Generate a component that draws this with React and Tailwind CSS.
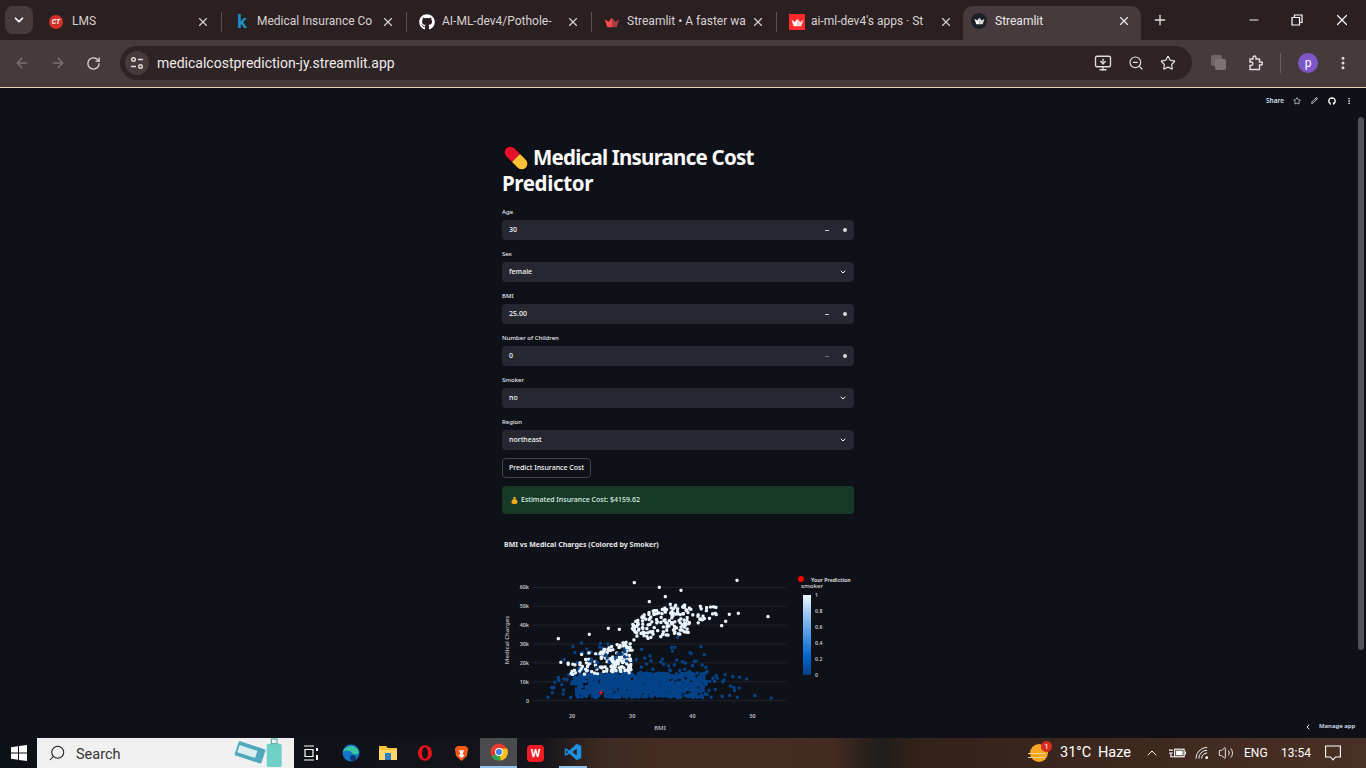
import React from 'react';
import { ArrowLeft, ArrowRight, RotateCw, X, Plus, Minus, ChevronDown, ChevronLeft, ChevronUp, Star, MoreVertical, Pencil, Volume2, ZoomOut, MonitorDown, Search } from 'lucide-react';
import { FaGithub } from 'react-icons/fa';

function mulberry(seed) {
    return function () {
        seed |= 0; seed = seed + 0x6D2B79F5 | 0;
        let t = Math.imul(seed ^ seed >>> 15, 1 | seed);
        t = t + Math.imul(t ^ t >>> 7, 61 | t) ^ t;
        return ((t ^ t >>> 14) >>> 0) / 4294967296;
    };
}

// page coordinates of the plot
const px = (bmi) => 572 + (bmi - 20) * 6.02;
const py = (k) => 700.7 - k * 1.89;

function buildPoints() {
    const r = mulberry(77);
    const normal = () => (r() + r() + r() + r() - 2) * 1.73;
    const blue = [];
    const white = [];
    for (let i = 0; i < 560; i++) {
        let bmi = 31 + normal() * 6.5;
        if (bmi < 16.5 || bmi > 48) bmi = 24 + r() * 14;
        blue.push({ x: px(bmi), y: py(1.6 + r() * 13), s: 0 });
    }
    for (let i = 0; i < 560; i++) {
        blue.push({ x: px(20.5 + r() * 21.5), y: py(1.8 + r() * 12.8), s: 0 });
    }
    for (let i = 0; i < 70; i++) {
        const bmi = 20 + r() * 23;
        blue.push({ x: px(bmi), y: py(13 + r() * r() * 20), s: 0 });
    }
    // smokers under bmi 30, a wedge that opens to the right
    for (let i = 0; i < 125; i++) {
        const bmi = 17.5 + Math.sqrt(r()) * 12.5;
        const k = 13 + (bmi - 17.5) * 0.15 + r() * (8 + (bmi - 17.5) * 0.75);
        white.push({ x: px(bmi), y: py(k), s: 1 });
    }
    for (let i = 0; i < 28; i++) {
        white.push({ x: px(26.5 + r() * 3), y: py(15.5 + r() * 6), s: 1 });
    }
    // smokers over bmi 30
    for (let i = 0; i < 150; i++) {
        const bmi = 30 + r() * 9.5;
        const k = 32 + (bmi - 30) * 0.35 + r() * Math.min(16, 9 + (bmi - 30) * 2);
        white.push({ x: px(bmi), y: py(k), s: 1 });
    }
    for (let i = 0; i < 24; i++) {
        white.push({ x: px(39 + r() * 5), y: py(41 + r() * 9), s: 1 });
    }
    // loose points read off the plot
    const loose = [[418, 38], [493, 52], [511, 80], [558, 61], [726, 31], [463, 95], [190, 206], [283, 193], [340, 175], [373, 178], [819, 140], [730, 130], [703, 133], [692, 154], [680, 167], [526, 103], [661, 130]];
    loose.forEach(([a, b]) => white.push({ x: 495 + a / 3, y: 570 + b / 3, s: 1 }));
    const looseBlue = [[159, 382], [780, 377], [829, 384], [755, 327], [713, 320], [618, 230], [628, 254], [548, 202], [316, 220], [275, 237], [208, 269], [540, 232], [530, 232], [440, 238], [468, 272], [545, 270], [598, 274]];
    looseBlue.forEach(([a, b]) => blue.push({ x: 495 + a / 3, y: 570 + b / 3, s: 0 }));
    // a few blue dots sit over the white ones
    const mixed = [];
    for (let i = 0; i < 14; i++) {
        mixed.push({ x: px(23 + r() * 7), y: py(17 + r() * 12), s: 0 });
    }
    return [...blue, ...white, ...mixed];
}

const points = buildPoints();

function Crown({ color = '#ff4b4b', shade = '#a83a44', className = '' }) {
    return (
        <svg viewBox="0 0 24 16" className={className}>
            <path d="M12 1 L17 7 L23 3 L19 15 H12 Z" fill={shade} />
            <path d="M12 1 L7 7 L1 3 L5 15 H12 Z" fill={color} />
        </svg>
    );
}

function Tab({ icon, title, width = 'w-[185px]', sep = true, titleClass = '' }) {
    return (
        <div className={`${width} h-[32px] flex items-center pl-[12px] pr-[10px] gap-[8px] shrink-0`}>
            <div className="w-[16px] h-[16px] flex items-center justify-center shrink-0">{icon}</div>
            <div className={`flex-1 overflow-hidden whitespace-nowrap text-[12px] text-[#d9d2d3] pb-[2px] -mr-[4px] ${titleClass}`}>{title}</div>
            <X size={14} strokeWidth={2} className="text-[#d9d2d3] shrink-0" />
            {sep && <div className="w-px h-[20px] bg-[#5b5052] ml-[3px] -mr-[10px]" />}
        </div>
    );
}

function TabStrip() {
    return (
        <div className="h-[40px] bg-[#2a1f21] flex items-end shrink-0 font-['Roboto',sans-serif]">
            <div className="w-[28px] h-[28px] mb-[6px] ml-[5px] mr-[3px] rounded-[8px] bg-[#453a3c] flex items-center justify-center shrink-0">
                <ChevronDown size={14} strokeWidth={3} className="text-white" />
            </div>
            <div className="flex items-center h-[40px] pt-[4px]">
                <Tab title="LMS" width="w-[186px]" icon={
                    <div className="w-[14px] h-[14px] rounded-full bg-[#d3302a] text-white text-[7px] font-bold italic flex items-center justify-center">CT</div>
                } />
                <Tab title="Medical Insurance Co" titleClass="-ml-[1px]" icon={<span className="text-[#1a8fc4] text-[18px] font-bold leading-none">k</span>} />
                <Tab title="AI-ML-dev4/Pothole-" titleClass="-ml-[1px]" icon={<FaGithub size={16} className="text-white" />} />
                <Tab title="Streamlit • A faster wa" titleClass="-ml-[1px]" icon={<Crown className="w-[16px] h-[11px]" />} />
                <Tab title="ai-ml-dev4's apps · St" titleClass="-ml-[2px]" width="w-[186px]" sep={false} icon={
                    <div className="w-[16px] h-[16px] bg-[#ff2b2b] flex items-center justify-center"><Crown color="#fff" shade="#ffd5d5" className="w-[13px] h-[9px]" /></div>
                } />
            </div>
            <div className="w-[178px] h-[34px] bg-[#463a3c] rounded-t-[10px] flex items-center pl-[8px] pr-[10px] pb-[4px] gap-[8px] shrink-0">
                <div className="w-[16px] h-[16px] rounded-full bg-[#1b2029] flex items-center justify-center"><Crown color="#fff" shade="#d8d8d8" className="w-[11px] h-[8px]" /></div>
                <div className="flex-1 text-[12px] text-[#ece7e8]">Streamlit</div>
                <X size={14} strokeWidth={2} className="text-[#ece7e8]" />
            </div>
            <div className="h-[40px] flex items-center ml-[11px] flex-1">
                <Plus size={16} strokeWidth={2} className="text-[#e5dfe0]" />
                <div className="ml-auto flex items-center gap-[30px] pr-[15px]">
                    <Minus size={14} strokeWidth={1.6} className="text-white" />
                    <svg viewBox="0 0 12 12" className="w-[12px] h-[12px]" fill="none" stroke="#fff" strokeWidth="1.2">
                        <path d="M1 3.5 H8.5 V11 H1 Z M3.5 3.5 V1 H11 V8.5 H8.5" />
                    </svg>
                    <X size={18} strokeWidth={1.6} className="text-white" />
                </div>
            </div>
        </div>
    );
}

function Toolbar() {
    return (
        <div className="h-[48px] bg-[#463a3c] flex items-center shrink-0 border-b border-[#e9d5b5] pb-[1px] font-['Roboto',sans-serif]">
            <div className="flex items-center gap-[20px] pl-[14px] w-[120px] shrink-0">
                <ArrowLeft size={16} strokeWidth={2} className="text-[#7d7173]" />
                <ArrowRight size={16} strokeWidth={2} className="text-[#7d7173]" />
                <RotateCw size={15} strokeWidth={2} className="text-[#e3dcdd]" />
            </div>
            <div className="w-[1072px] h-[34px] rounded-full bg-[#2e2325] flex items-center pl-[5px] pr-[16px]">
                <div className="w-[24px] h-[24px] rounded-full bg-[#463a3c] flex items-center justify-center">
                    <svg viewBox="0 0 14 14" className="w-[14px] h-[14px]" fill="none" stroke="#e3dcdd" strokeWidth="1.4">
                        <circle cx="3.5" cy="3.5" r="1.8" />
                        <path d="M8 3.5 H13 M1 10.5 H6" />
                        <circle cx="10.5" cy="10.5" r="1.8" />
                    </svg>
                </div>
                <div className="ml-[8px] text-[14px] text-[#efeaeb] flex-1">medicalcostprediction-jy.streamlit.app</div>
                <div className="flex items-center gap-[16px] text-[#e3dcdd]">
                    <MonitorDown size={18} strokeWidth={1.8} />
                    <ZoomOut size={16} strokeWidth={1.8} />
                    <Star size={16} strokeWidth={1.8} />
                </div>
            </div>
            <div className="flex items-center flex-1 pl-[19px] text-[#e3dcdd]">
                <div className="w-[16px] h-[16px] relative">
                    <div className="w-[11px] h-[11px] bg-[#6f6566] rounded-[2px]" />
                    <div className="absolute left-[4px] top-[4px] w-[11px] h-[11px] bg-[#7d7374] rounded-[2px]" />
                </div>
                <svg viewBox="0 0 16 16" className="w-[16px] h-[16px] ml-[20px]" fill="none" stroke="#e3dcdd" strokeWidth="1.4">
                    <path d="M3 4 H6 V2.5 A1.5 1.5 0 0 1 9 2.5 V4 H12.5 V7 H14 A1.5 1.5 0 0 1 14 10 H12.5 V14.5 H3 V10.5 H4.5 A1.8 1.8 0 0 0 4.5 7 H3 Z" />
                </svg>
                <div className="w-px h-[20px] bg-[#6a5f60] ml-[17px]" />
                <div className="ml-[17px] w-[20px] h-[20px] rounded-full bg-[#7b57c8] text-white text-[12px] flex items-center justify-center">p</div>
                <MoreVertical size={16} strokeWidth={2.5} className="ml-[17px]" />
            </div>
        </div>
    );
}

function Field({ label, children }) {
    return (
        <div className="h-[42px] flex flex-col justify-end pb-[2px]">
            <div className="text-[6px] leading-[9px] mb-[3px] font-medium text-[#e6eaf1]">{label}</div>
            {children}
        </div>
    );
}

function NumberField({ label, value, dim }) {
    return (
        <Field label={label}>
            <div className="h-[20px] rounded-[4px] bg-[#262730] flex items-center pl-[7px] pr-[7px] text-[7px] font-medium text-[#fafafa]">
                <span className="flex-1">{value}</span>
                <span className={`w-[4px] h-[1px] ${dim ? 'bg-[#6b6d76]' : 'bg-[#c9cad0]'} mr-[14px]`} />
                <span className="w-[4px] h-[4px] rounded-full bg-[#d8d9de]" />
            </div>
        </Field>
    );
}

function SelectField({ label, value }) {
    return (
        <Field label={label}>
            <div className="h-[20px] rounded-[4px] bg-[#262730] flex items-center pl-[7px] pr-[7px] text-[7px] font-medium text-[#fafafa]">
                <span className="flex-1">{value}</span>
                <ChevronDown size={8} strokeWidth={3} className="text-[#fafafa]" />
            </div>
        </Field>
    );
}

function Pill() {
    return (
        <svg viewBox="0 0 24 24" className="w-[30px] h-[30px] inline-block align-baseline -ml-[1px] mr-[2px] -my-[8px]">
            <g transform="rotate(45 12 12)">
                <rect x="-0.5" y="6.5" width="25" height="11" rx="5.5" fill="#0b0b0b" />
                <path d="M12 7.5 H5.5 a4.5 4.5 0 0 0 0 9 H12 Z" fill="#e8112d" />
                <path d="M12 7.5 H18.5 a4.5 4.5 0 0 1 0 9 H12 Z" fill="#fdc235" />
            </g>
        </svg>
    );
}

function Chart() {
    const gridK = [0, 10, 20, 30, 40, 50, 60];
    const bars = [['1', 595], ['0.8', 611], ['0.6', 627], ['0.4', 643], ['0.2', 659], ['0', 675]];
    return (
        <svg viewBox="502 530 352 208" className="w-[352px] h-[208px] block shrink-0" fontFamily="'Noto Sans',sans-serif">
            <defs>
                <linearGradient id="cbar" x1="0" y1="1" x2="0" y2="0">
                    <stop offset="0" stopColor="#003f86" />
                    <stop offset="0.2" stopColor="#0062c4" />
                    <stop offset="0.4" stopColor="#2f84dc" />
                    <stop offset="0.6" stopColor="#69a9ea" />
                    <stop offset="0.8" stopColor="#a9d0f5" />
                    <stop offset="1" stopColor="#eef7ff" />
                </linearGradient>
            </defs>
            <text x="504" y="547" fontSize="7" fontWeight="700" fill="#e6e7ea">BMI vs Medical Charges (Colored by Smoker)</text>
            {gridK.map((k) => (
                <g key={k}>
                    <line x1="533" x2="786" y1={py(k)} y2={py(k)} stroke="#262a33" strokeWidth="0.8" />
                    <text x="529" y={py(k) + 2} fontSize="5.4" fill="#c4c6cc" textAnchor="end" fontWeight="600">{k === 0 ? '0' : `${k}k`}</text>
                </g>
            ))}
            {[20, 30, 40, 50].map((b) => (
                <text key={b} x={px(b)} y="718" fontSize="5.4" fill="#c4c6cc" textAnchor="middle" fontWeight="600">{b}</text>
            ))}
            <text x="660" y="730" fontSize="6" fill="#b5b7bd" textAnchor="middle" fontWeight="600">BMI</text>
            <text transform="translate(509 640) rotate(-90)" fontSize="6" fill="#b5b7bd" textAnchor="middle" fontWeight="600">Medical Charges</text>
            {points.map((p, i) => (
                <rect key={i} x={p.x - 1.6} y={p.y - 1.6} width="3.2" height="3.2" rx="1.1" fill={p.s ? '#eaf4ff' : '#05438a'} />
            ))}
            <path d="M601 690.2 V695.2 M598.8 692.7 H603.2" stroke="#ff1010" strokeWidth="1" />
            <circle cx="801" cy="579" r="3" fill="#ff0000" />
            <text x="811" y="582" fontSize="5.2" fontWeight="700" fill="#d6d7db">Your Prediction</text>
            <text x="801" y="588" fontSize="6" fontWeight="600" fill="#c9cace">smoker</text>
            <rect x="803" y="595" width="8" height="80" fill="url(#cbar)" />
            {bars.map(([t, y]) => (
                <text key={t} x="815" y={y + 2} fontSize="5.2" fontWeight="600" fill="#c4c6cc">{t}</text>
            ))}
        </svg>
    );
}

function AppBody() {
    return (
        <div className="flex-1 bg-[#0e1117] relative overflow-hidden font-['Noto_Sans',sans-serif]">
            <div className="absolute top-[8px] left-[1266px] flex items-center text-white">
                <span className="text-[6.5px] font-semibold text-[#d5e3f5] w-[20px]">Share</span>
                <Star size={8} strokeWidth={2} className="ml-[7px]" />
                <Pencil size={7} strokeWidth={2.5} className="ml-[10px]" />
                <FaGithub size={8} className="ml-[10px]" />
                <MoreVertical size={8} strokeWidth={2.5} className="ml-[9px]" />
            </div>
            <div className="absolute left-[1358px] top-[29px] w-[6px] h-[533px] rounded-full bg-[#4f5257]" />
            <div className="w-[1356px] flex flex-col items-center pt-[55px]">
                <div className="w-[352px] flex flex-col">
                    <h1 className="text-[20.5px] leading-[26px] pt-[1px] font-bold text-[#fafafa] h-[57px]">
                        <span className="tracking-[-0.77px]"><Pill />Medical Insurance Cost</span><br />
                        <span className="tracking-[-0.37px]">Predictor</span>
                    </h1>
                    <NumberField label="Age" value="30" />
                    <SelectField label="Sex" value="female" />
                    <NumberField label="BMI" value="25.00" />
                    <NumberField label="Number of Children" value="0" dim />
                    <SelectField label="Smoker" value="no" />
                    <SelectField label="Region" value="northeast" />
                    <div className="mt-[6px] w-[89px] h-[20px] rounded-[4px] border border-[#42444d] flex items-center justify-center text-[7px] font-medium text-[#fafafa] whitespace-nowrap">
                        Predict Insurance Cost
                    </div>
                    <div className="mt-[8px] h-[28px] rounded-[4px] bg-[#173928] flex items-center pl-[9px] text-[7px] font-medium text-[#dff3e4]">
                        <svg viewBox="0 0 10 12" className="w-[7px] h-[9px] mr-[3px]">
                            <path d="M3 1 H7 L6 3.5 C9 5 10 8 9 10 C8.5 11.5 1.5 11.5 1 10 C0 8 1 5 4 3.5 Z" fill="#f2a81d" />
                        </svg>
                        Estimated Insurance Cost: $4159.62
                    </div>
                    <div className="mt-[16px]">
                        <Chart />
                    </div>
                </div>
            </div>
            <div className="absolute left-[1304px] top-[634px] flex items-center text-[#e6eaf1]">
                <ChevronLeft size={8} strokeWidth={3} />
                <span className="ml-[7px] text-[6px] font-semibold text-[#d5e3f5]">Manage app</span>
            </div>
        </div>
    );
}

function Taskbar() {
    return (
        <div className="h-[30px] shrink-0 flex items-center bg-[linear-gradient(to_right,#0c1017_0,#14141a_540px,#3c2a22_600px,#472d21_680px,#452b20_830px,#201d1b_880px,#33221a_920px,#4a3024_1366px)] font-['Roboto',sans-serif]">
            <div className="w-[37px] flex justify-center shrink-0">
                <svg viewBox="0 0 16 16" className="w-[16px] h-[16px]">
                    <path d="M0 2.3 L7 1.3 V7.6 H0 Z M8 1.1 L16 0 V7.6 H8 Z M0 8.4 H7 V14.7 L0 13.7 Z M8 8.4 H16 V16 L8 14.9 Z" fill="#fff" />
                </svg>
            </div>
            <div className="w-[257px] h-[30px] bg-[#f0f0f0] flex items-center pl-[11px] shrink-0">
                <Search size={18} strokeWidth={1.4} className="text-[#1c1c1c] -scale-x-100" />
                <span className="ml-[10px] pt-[3px] text-[14.5px] text-[#333]">Search</span>
                <svg viewBox="0 0 56 32" className="w-[56px] h-[30px] ml-auto mr-[4px]">
                    <g transform="rotate(18 14 16)">
                        <rect x="0" y="7" width="30" height="16" rx="1.5" fill="#4fa8bb" />
                        <rect x="2" y="11" width="20" height="8" fill="#dceef2" />
                    </g>
                    <rect x="33" y="6" width="16" height="25" rx="2" fill="#6fd0c8" />
                    <rect x="38" y="1" width="6" height="5" fill="none" stroke="#5aa9a4" strokeWidth="1.2" />
                </svg>
            </div>
            <div className="flex items-center h-[30px] shrink-0">
                <div className="w-[38px] pl-[9px]">
                    <svg viewBox="0 0 16 16" className="w-[16px] h-[16px]" fill="none" stroke="#fff" strokeWidth="1.2">
                        <path d="M1 1 H11 M1 15 H11 M2 4.5 H10 V11.5 H2 Z" />
                        <path d="M14 3 V6 M14 10 V15" strokeWidth="2" />
                    </svg>
                </div>
                <div className="w-[37px] flex justify-center">
                    <svg viewBox="0 0 18 18" className="w-[18px] h-[18px]">
                        <circle cx="9" cy="9" r="8.5" fill="#1477c8" />
                        <path d="M1 8 C3 1 14 0 17 8 C17 11 11 11 10 9 C8 6 3 6 1 8 Z" fill="#37c6a0" />
                        <circle cx="11" cy="14" r="3" fill="#0f3a78" />
                    </svg>
                </div>
                <div className="w-[37px] flex justify-center">
                    <svg viewBox="0 0 18 16" className="w-[18px] h-[16px]">
                        <path d="M0 1 H7 L9 3 H18 V15 H0 Z" fill="#f5c33b" />
                        <rect x="0" y="5" width="18" height="10" fill="#ffd769" />
                        <rect x="6" y="8" width="6" height="7" fill="#2b7fc4" />
                    </svg>
                </div>
                <div className="w-[37px] flex justify-center">
                    <svg viewBox="0 0 18 18" className="w-[16px] h-[16px]">
                        <ellipse cx="9" cy="9" rx="8" ry="8.8" fill="#e3121e" />
                        <ellipse cx="9" cy="9" rx="3.4" ry="6.6" fill="#1a1114" />
                    </svg>
                </div>
                <div className="w-[37px] flex justify-center">
                    <svg viewBox="0 0 18 20" className="w-[15px] h-[17px]">
                        <path d="M4 1 H14 L17 4 L15.5 13 L9 19 L2.5 13 L1 4 Z" fill="#f25a1c" />
                        <path d="M6 6 H12 L10.5 10 L12 13 L9 15.5 L6 13 L7.5 10 Z" fill="#fff" />
                    </svg>
                </div>
                <div className="w-[37px] h-[30px] bg-[#4a4b4e] flex items-center justify-center border-b-[2px] border-[#8fc1ea]">
                    <svg viewBox="0 0 20 20" className="w-[18px] h-[18px]">
                        <circle cx="10" cy="10" r="9.5" fill="#e53c2e" />
                        <path d="M10 10 L1.8 15 A9.5 9.5 0 0 0 13 19 Z" fill="#2fa44f" />
                        <path d="M10 6 H19 A9.5 9.5 0 0 1 12 19.4 L10 10 Z" fill="#fbc116" />
                        <circle cx="10" cy="10" r="4.4" fill="#fff" />
                        <circle cx="10" cy="10" r="3.4" fill="#3f84e8" />
                    </svg>
                </div>
                <div className="w-[37px] flex justify-center">
                    <div className="w-[17px] h-[17px] rounded-[4px] bg-[#ee1c25] flex items-center justify-center text-white text-[11px] font-bold leading-none">W</div>
                </div>
                <div className="w-[37px] h-[30px] flex justify-center">
                    <div className="w-[28px] h-[30px] flex items-center justify-center border-b-[2px] border-[#8fc1ea]">
                        <svg viewBox="0 0 24 24" className="w-[18px] h-[18px]">
                            <path d="M17 1 L23 4 V20 L17 23 L7 14 L3 17 L1 16 V8 L3 7 L7 10 Z M17 7.5 L11 12 L17 16.5 Z M3 9.5 V14.5 L5.5 12 Z" fill="#1f8fe0" fillRule="evenodd" />
                        </svg>
                    </div>
                </div>
            </div>
            <div className="ml-auto flex items-center h-[30px] text-white shrink-0">
                <div className="relative w-[22px] h-[24px] mr-[10px]">
                    <div className="absolute left-[2px] top-[3px] w-[18px] h-[18px] rounded-full bg-[#f5a623]" />
                    <div className="absolute left-0 top-[12px] w-[17px] h-[1px] bg-[#fbd38a]" />
                    <div className="absolute left-0 top-[16px] w-[17px] h-[1px] bg-[#fbd38a]" />
                    <div className="absolute right-[-2px] top-0 w-[11px] h-[11px] rounded-full bg-[#d92c20] text-[8px] leading-[11px] text-center">1</div>
                </div>
                <span className="text-[14.5px] w-[38px]">31°C</span>
                <span className="text-[14.5px] w-[46px]">Haze</span>
                <ChevronUp size={16} strokeWidth={1.5} className="mr-[9px]" />
                <svg viewBox="0 0 18 12" className="w-[17px] h-[12px] mr-[9px]" fill="none" stroke="#fff" strokeWidth="1.2">
                    <path d="M0 3 H4 M0 6 H4 M2 6 V10 H6" />
                    <rect x="6" y="2" width="10" height="8" />
                    <rect x="7.5" y="3.5" width="7" height="5" fill="#fff" stroke="none" />
                    <path d="M17.5 4.5 V7.5" />
                </svg>
                <svg viewBox="0 0 16 14" className="w-[15px] h-[14px] mr-[8px]" fill="none" stroke="#fff" strokeWidth="1">
                    <path d="M1 13 A12 12 0 0 1 13 1 M4 13 A9 9 0 0 1 13 4 M7 13 A6 6 0 0 1 13 7" />
                    <circle cx="12.5" cy="12" r="1.5" fill="#fff" stroke="none" />
                </svg>
                <Volume2 size={16} strokeWidth={1.3} className="mr-[10px]" />
                <span className="text-[12px] w-[37px]">ENG</span>
                <span className="text-[12px] w-[44px]">13:54</span>
                <svg viewBox="0 0 16 16" className="w-[16px] h-[16px] mr-[25px]" fill="none" stroke="#fff" strokeWidth="1.1">
                    <path d="M0.6 1 H15.4 V12 H10.5 L8 14.8 L5.5 12 H0.6 Z" />
                </svg>
            </div>
        </div>
    );
}

export default function App() {
    return (
        <div className="w-[1366px] h-[768px] flex flex-col overflow-hidden bg-[#0e1117] font-['Noto_Sans',sans-serif]">
            <TabStrip />
            <Toolbar />
            <AppBody />
            <Taskbar />
        </div>
    );
}
